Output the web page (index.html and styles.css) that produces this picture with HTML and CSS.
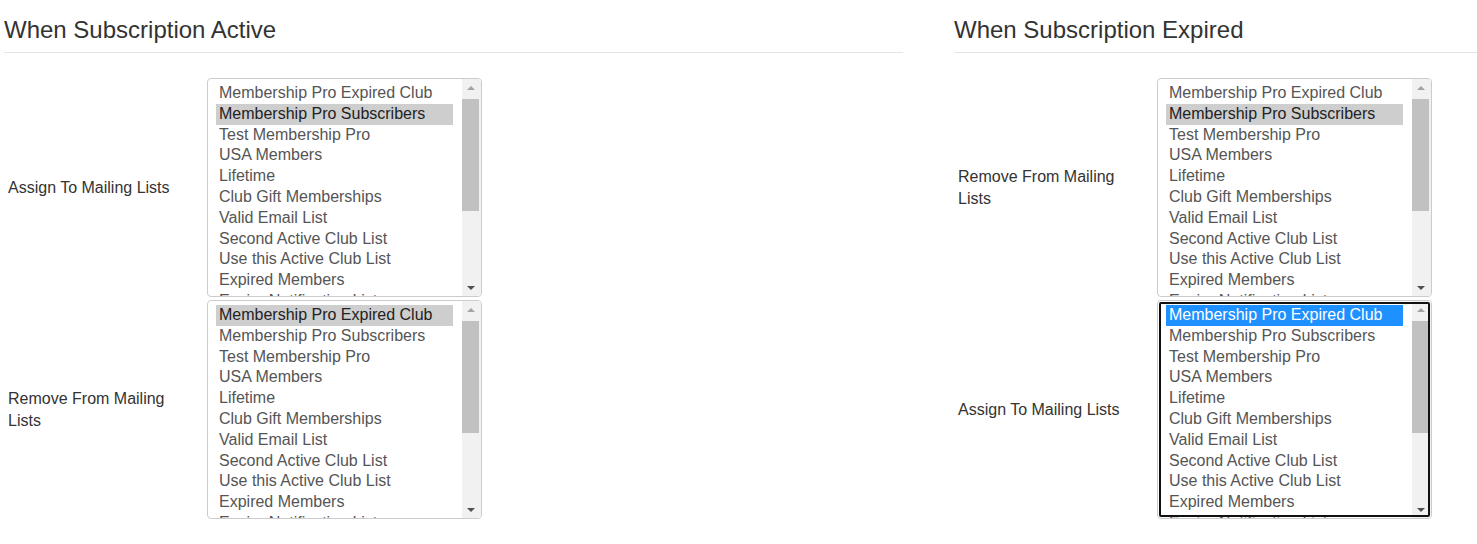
FILE: index.html
```html
<!DOCTYPE html>
<html lang="en">
<head>
    <meta charset="UTF-8">
    <meta name="viewport" content="width=device-width, initial-scale=1.0">
    <title>Mailing List Rules</title>
    <link rel="stylesheet" href="styles.css">
</head>
<body>
    <div class="page">
        <section class="panel">
            <h3 class="panel-title">When Subscription Active</h3>
            <div class="field">
                <label class="field-label">Assign To Mailing Lists</label>
                <div class="listbox" role="listbox" aria-multiselectable="true" data-selected="1"></div>
            </div>
            <div class="field">
                <label class="field-label">Remove From Mailing Lists</label>
                <div class="listbox" role="listbox" aria-multiselectable="true" data-selected="0"></div>
            </div>
        </section>

        <section class="panel">
            <h3 class="panel-title">When Subscription Expired</h3>
            <div class="field">
                <label class="field-label">Remove From Mailing Lists</label>
                <div class="listbox" role="listbox" aria-multiselectable="true" data-selected="1"></div>
            </div>
            <div class="field">
                <label class="field-label">Assign To Mailing Lists</label>
                <div class="listbox focused" role="listbox" aria-multiselectable="true" data-selected="0" tabindex="0"></div>
            </div>
        </section>
    </div>

    <script>
        const mailingLists = [
            "Membership Pro Expired Club",
            "Membership Pro Subscribers",
            "Test Membership Pro",
            "USA Members",
            "Lifetime",
            "Club Gift Memberships",
            "Valid Email List",
            "Second Active Club List",
            "Use this Active Club List",
            "Expired Members",
            "Expire Notification List"
        ];

        // scrollbar drawn by hand, the headless browser hides native ones
        const scrollbarHtml =
            '<div class="scroll-btn up"><svg width="8" height="4"><path d="M0 4h8L4 0z"/></svg></div>' +
            '<div class="scroll-track"><div class="scroll-thumb"></div></div>' +
            '<div class="scroll-btn down"><svg width="8" height="4"><path d="M0 0h8L4 4z"/></svg></div>';

        document.querySelectorAll(".listbox").forEach(function (box) {
            const selected = parseInt(box.dataset.selected, 10);
            const options = document.createElement("div");
            options.className = "listbox-options";

            mailingLists.forEach(function (name, i) {
                const opt = document.createElement("div");
                opt.className = "option" + (i === selected ? " selected" : "");
                opt.setAttribute("role", "option");
                opt.textContent = name;
                options.appendChild(opt);
            });

            const bar = document.createElement("div");
            bar.className = "scrollbar";
            bar.innerHTML = scrollbarHtml;

            box.appendChild(options);
            box.appendChild(bar);
        });
    </script>
</body>
</html>
```

FILE: styles.css
```css
body {
    margin: 0;
    font-family: "Liberation Sans", Arial, sans-serif;
    color: #333;
    background: #fff;
    overflow: hidden;
}
.page {
    display: grid;
    grid-template-columns: 899px 1fr;
    column-gap: 51px;
    padding-left: 4px;
}
.panel-title {
    margin: 17px 0 25px;
    padding-bottom: 9px;
    border-bottom: 1px solid #e5e5e5;
    font-size: 24px;
    font-weight: normal;
    line-height: 26px;
    color: #333;
}
.field {
    display: grid;
    grid-template-columns: 203px 275px;
    align-items: center;
    margin-bottom: 3px;
}
.field-label {
    padding: 0 12px 0 4px;
    font-size: 16px;
    line-height: 22px;
}
.listbox {
    display: flex;
    height: 219px;
    box-sizing: border-box;
    border: 1px solid #ccc;
    border-radius: 4px;
    overflow: hidden;
    font-size: 16px;
    color: #555;
    background: #fff;
}
.listbox.focused {
    outline: 2px solid #111;
    outline-offset: -4px;
}
.listbox-options {
    flex: 1;
    min-width: 0;
    padding: 4px 9px 0 8px;
    overflow: hidden;
}
.option {
    padding: 0 3px;
    line-height: 20.8px;
    white-space: nowrap;
}
.option.selected {
    background: #cecece;
    color: #222;
}
.focused .option.selected {
    background: #1e90ff;
    color: #fff;
}
.scrollbar {
    display: flex;
    flex-direction: column;
    width: 19px;
    background: #f1f1f1;
}
.scroll-btn {
    display: flex;
    align-items: center;
    justify-content: center;
    height: 17px;
    padding-right: 2px;
}
.scroll-btn.up svg {
    fill: #a3a3a3;
}
.scroll-btn.down svg {
    fill: #505050;
}
.scroll-track {
    flex: 1;
    padding-top: 3px;
}
.scroll-thumb {
    height: 112px;
    margin-right: 2px;
    background: #c1c1c1;
}
```
